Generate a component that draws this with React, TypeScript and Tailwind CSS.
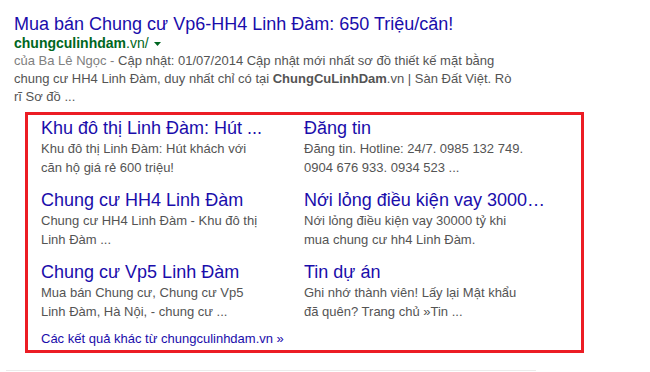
const sitelinks = [
  {
    title: "Khu đô thị Linh Đàm: Hút ...",
    lines: ["Khu đô thị Linh Đàm: Hút khách với", "căn hộ giá rẻ 600 triệu!"]
  },
  {
    title: "Đăng tin",
    lines: ["Đăng tin. Hotline: 24/7. 0985 132 749.", "0904 676 933. 0934 523 ..."]
  },
  {
    title: "Chung cư HH4 Linh Đàm",
    lines: ["Chung cư HH4 Linh Đàm - Khu đô thị", "Linh Đàm ..."]
  },
  {
    title: "Nới lỏng điều kiện vay 3000…",
    lines: ["Nới lỏng điều kiện vay 30000 tỷ khi", "mua chung cư hh4 Linh Đàm."]
  },
  {
    title: "Chung cư Vp5 Linh Đàm",
    lines: ["Mua bán Chung cư, Chung cư Vp5", "Linh Đàm, Hà Nội, - chung cư ..."]
  },
  {
    title: "Tin dự án",
    lines: ["Ghi nhớ thành viên! Lấy lại Mật khẩu", "đã quên? Trang chủ »Tin ..."]
  }
];

export default function App() {
  return (
    <div className="min-h-[372px] bg-white pl-[14px] pt-[13px] font-['Liberation_Sans',Arial,sans-serif]">
      <a href="#" className="block whitespace-nowrap text-[18px] leading-[22px] text-[#1a0dab]">
        Mua bán Chung cư Vp6-HH4 Linh Đàm: 650 Triệu/căn!
      </a>
      <div className="flex items-center whitespace-nowrap text-[14px] leading-[16px] text-[#006621]">
        <span>
          <b>chungculinhdam</b>.vn/
        </span>
        <svg width="7" height="4" viewBox="0 0 7 4" className="ml-[5px] mt-[1px]">
          <path d="M0 0h7L3.5 4z" fill="#006621" />
        </svg>
      </div>
      <div className="mt-[1px] whitespace-nowrap text-[13px] leading-[18px] text-[#545454]">
        <span className="text-[#808080]">của Ba Lê Ngọc - </span>
        Cập nhật: 01/07/2014 Cập nhật mới nhất sơ đồ thiết kế mặt bằng
        <br />
        chung cư HH4 Linh Đàm, duy nhất chỉ có tại <b>ChungCuLinhDam</b>.vn | Sàn Đất Việt. Rò
        <br />
        rĩ Sơ đồ ...
      </div>

      <div className="ml-[11px] mt-[6px] w-[559px] border-[3px] border-[#ec1c24] pb-[2px] pl-[13px] pt-[2px]">
        <div className="grid grid-cols-[263px_1fr] gap-y-[12px]">
          {sitelinks.map((s) => (
            <div key={s.title} className="whitespace-nowrap">
              <a href="#" className="block text-[18px] leading-[22px] text-[#1a0dab]">
                {s.title}
              </a>
              <div className="text-[13px] leading-[19px] text-[#545454]">
                {s.lines[0]}
                <br />
                {s.lines[1]}
              </div>
            </div>
          ))}
        </div>
        <a href="#" className="mt-[9px] block text-[13px] leading-[18px] text-[#1a0dab]">
          Các kết quả khác từ chungculinhdam.vn »
        </a>
      </div>

      <div className="-ml-[8px] mt-[17px] h-px w-[530px] bg-[#ebebeb]" />
    </div>
  );
}
